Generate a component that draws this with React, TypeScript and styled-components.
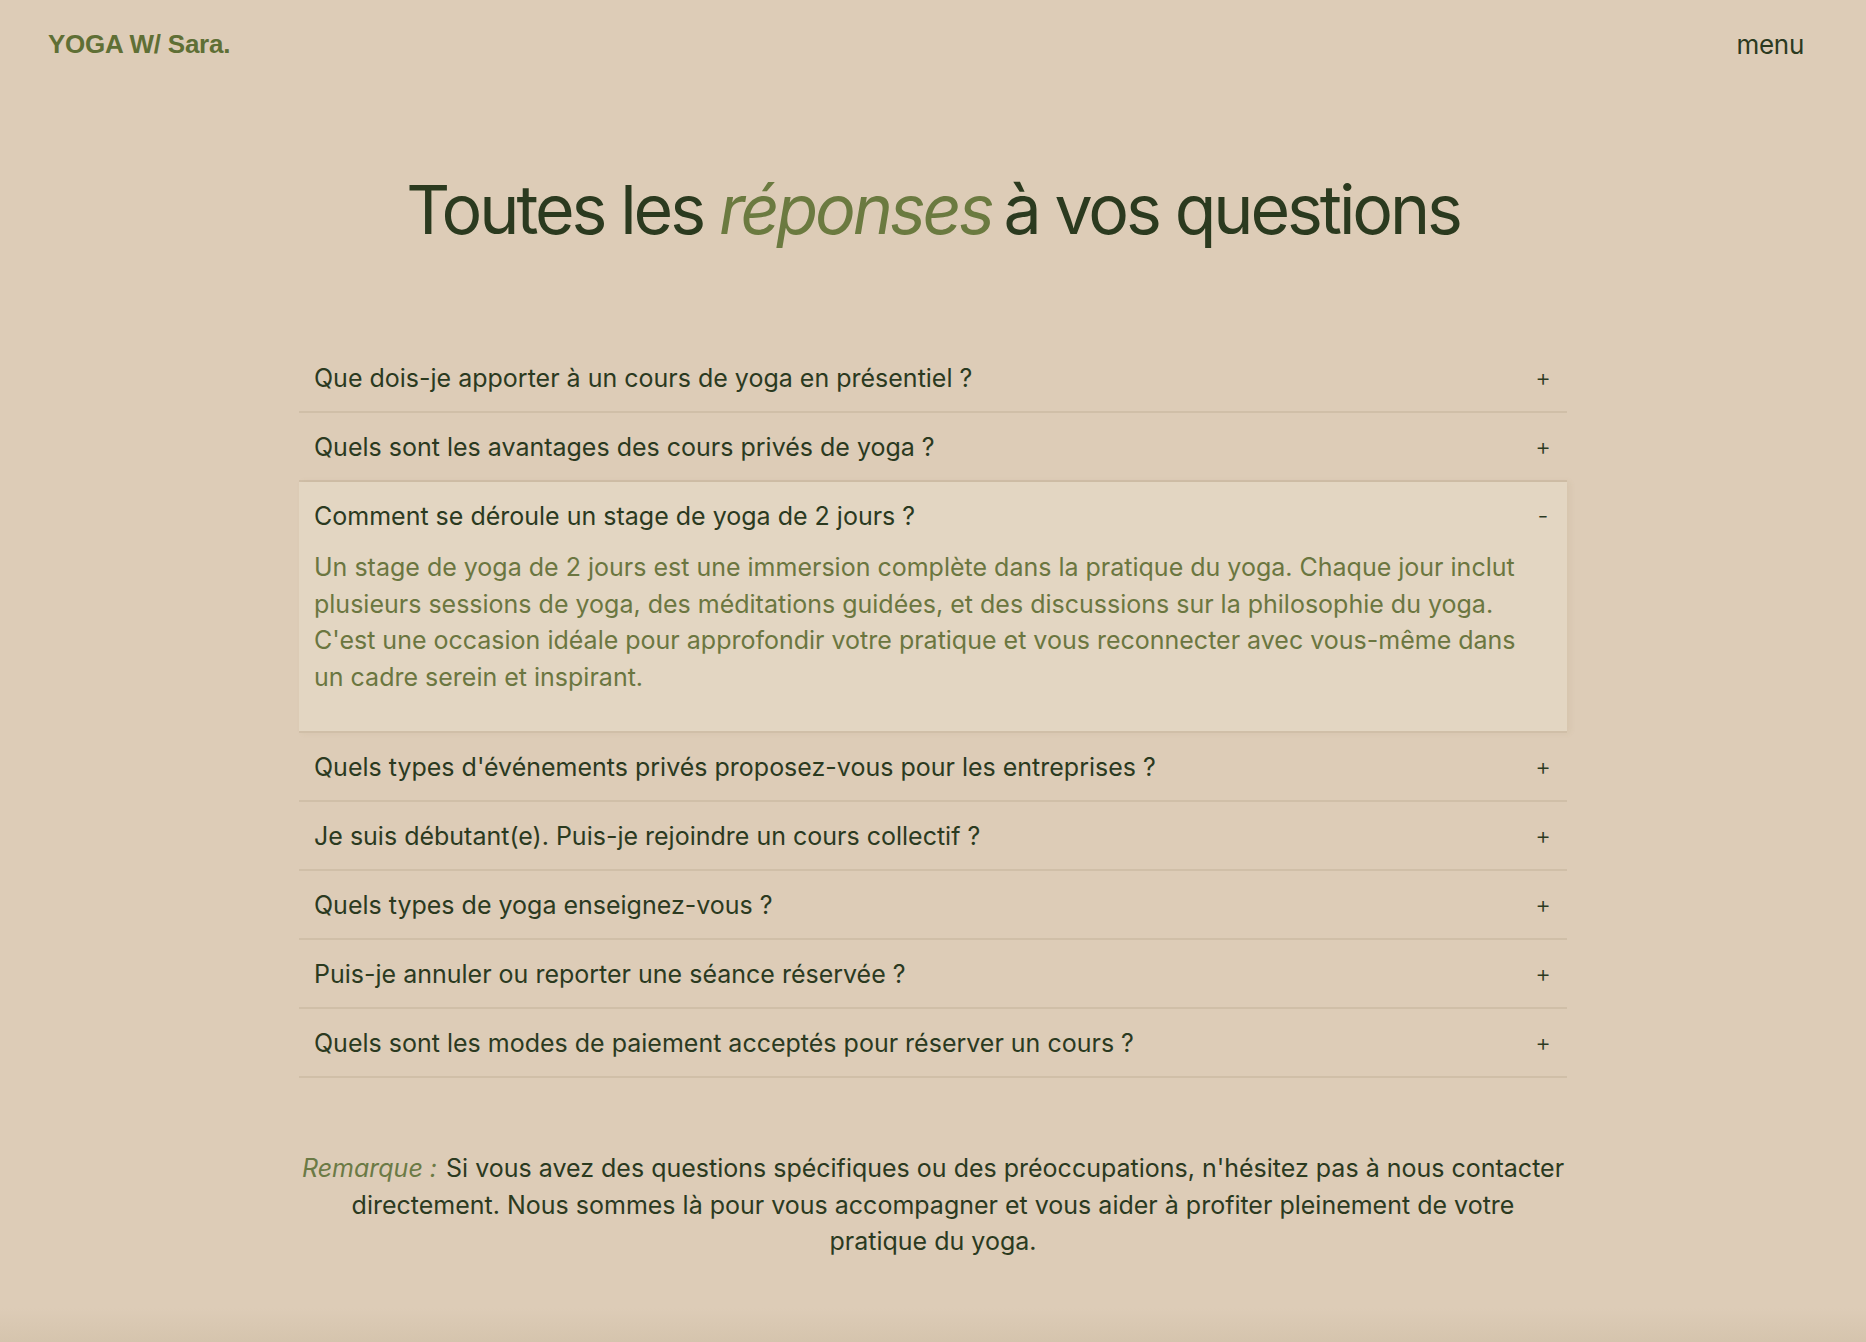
import React, { useState } from "react";
import styled, { createGlobalStyle } from "styled-components";

const GlobalStyle = createGlobalStyle`
  html, body {
    margin: 0;
    padding: 0;
    background: #ddccb7;
  }
  body {
    font-family: Inter, "Noto Sans", "Liberation Sans", sans-serif;
    color: #2b3a1f;
    -webkit-font-smoothing: antialiased;
  }
  * { box-sizing: border-box; }
`;

const Page = styled.div`
  min-height: 100vh;
  display: flex;
  flex-direction: column;
  background: linear-gradient(
    to bottom,
    #ddccb7 0%,
    #ddccb7 calc(100% - 34px),
    #d5c4ad 100%
  );
`;

const TopBar = styled.header`
  display: flex;
  justify-content: space-between;
  align-items: center;
  padding: 27px 62px 0 48px;
  height: 62px;
`;

const Logo = styled.a`
  font-family: "Liberation Sans", Arial, sans-serif;
  font-weight: 700;
  font-size: 26px;
  letter-spacing: -0.25px;
  color: #5f6f35;
  text-decoration: none;
`;

const MenuButton = styled.button`
  background: none;
  border: none;
  padding: 0;
  font-family: Inter, sans-serif;
  font-size: 26px;
  font-weight: 400;
  letter-spacing: -0.3px;
  color: #2b3a1f;
  cursor: pointer;
`;

const Title = styled.h1`
  margin: 113px 0 0;
  text-align: center;
  font-family: Inter, sans-serif;
  font-weight: 400;
  font-size: 68px;
  line-height: 1;
  letter-spacing: -3.1px;
  color: #2b3a1f;
`;

const TitleAccent = styled.em`
  font-style: italic;
  color: #6b7a40;
  margin-right: -4px;
`;

const List = styled.div`
  width: 1268px;
  margin: 101px auto 0;
  display: flex;
  flex-direction: column;
`;

const Item = styled.div<{ $open: boolean }>`
  background: ${(p) => (p.$open ? "#e3d6c2" : "transparent")};
  border-bottom: 2px solid #d0bfa8;
  box-shadow: ${(p) => (p.$open ? "3px 0 6px rgba(140, 110, 70, 0.08)" : "none")};
`;

const Question = styled.button`
  width: 100%;
  height: 67px;
  display: flex;
  align-items: center;
  justify-content: space-between;
  padding: 0 16px 0 15px;
  background: none;
  border: none;
  cursor: pointer;
  text-align: left;
  font-family: Inter, sans-serif;
  font-size: 25px;
  font-weight: 400;
  letter-spacing: 0;
  color: #2b3a1f;
`;

const Sign = styled.span`
  width: 16px;
  text-align: center;
  font-size: 24px;
  font-weight: 300;
  color: #2b3a1f;
`;

const Answer = styled.p`
  margin: 0;
  padding: 0 40px 36px 15px;
  font-family: Inter, sans-serif;
  font-size: 25px;
  line-height: 36.5px;
  letter-spacing: 0;
  color: #6b7640;
`;

const Note = styled.p`
  width: 1264px;
  margin: 72px auto 0;
  text-align: center;
  font-family: Inter, sans-serif;
  font-size: 25px;
  line-height: 36.5px;
  letter-spacing: 0;
  color: #2b3a1f;
`;

const NoteLabel = styled.em`
  font-style: italic;
  color: #6b7a45;
  margin-right: 2px;
`;

const faqs = [
  {
    q: "Que dois-je apporter à un cours de yoga en présentiel ?",
    a: "Apportez votre tapis, une tenue confortable et une bouteille d'eau.",
  },
  {
    q: "Quels sont les avantages des cours privés de yoga ?",
    a: "Un accompagnement personnalisé, adapté à vos besoins et à votre rythme.",
  },
  {
    q: "Comment se déroule un stage de yoga de 2 jours ?",
    a: "Un stage de yoga de 2 jours est une immersion complète dans la pratique du yoga. Chaque jour inclut plusieurs sessions de yoga, des méditations guidées, et des discussions sur la philosophie du yoga. C'est une occasion idéale pour approfondir votre pratique et vous reconnecter avec vous-même dans un cadre serein et inspirant.",
  },
  {
    q: "Quels types d'événements privés proposez-vous pour les entreprises ?",
    a: "Des séances de yoga en entreprise, des ateliers bien-être et des retraites.",
  },
  {
    q: "Je suis débutant(e). Puis-je rejoindre un cours collectif ?",
    a: "Bien sûr, les cours collectifs sont ouverts à tous les niveaux.",
  },
  {
    q: "Quels types de yoga enseignez-vous ?",
    a: "Hatha, Vinyasa et Yin yoga.",
  },
  {
    q: "Puis-je annuler ou reporter une séance réservée ?",
    a: "Oui, jusqu'à 24 heures avant la séance.",
  },
  {
    q: "Quels sont les modes de paiement acceptés pour réserver un cours ?",
    a: "Carte bancaire, virement et espèces.",
  },
];

export default function App() {
  const [open, setOpen] = useState<number>(2);
  return (
    <>
      <GlobalStyle />
      <Page>
        <TopBar>
          <Logo href="#">YOGA W/ Sara.</Logo>
          <MenuButton>menu</MenuButton>
        </TopBar>
        <Title>
          Toutes les <TitleAccent>réponses</TitleAccent> à vos questions
        </Title>
        <List>
          {faqs.map((f, i) => {
            const isOpen = open === i;
            return (
              <Item key={i} $open={isOpen}>
                <Question onClick={() => setOpen(isOpen ? -1 : i)}>
                  <span>{f.q}</span>
                  <Sign>{isOpen ? "-" : "+"}</Sign>
                </Question>
                {isOpen && <Answer>{f.a}</Answer>}
              </Item>
            );
          })}
        </List>
        <Note>
          <NoteLabel>Remarque :</NoteLabel> Si vous avez des questions spécifiques ou des
          préoccupations, n'hésitez pas à nous contacter directement. Nous sommes là pour
          vous accompagner et vous aider à profiter pleinement de votre pratique du yoga.
        </Note>
      </Page>
    </>
  );
}
